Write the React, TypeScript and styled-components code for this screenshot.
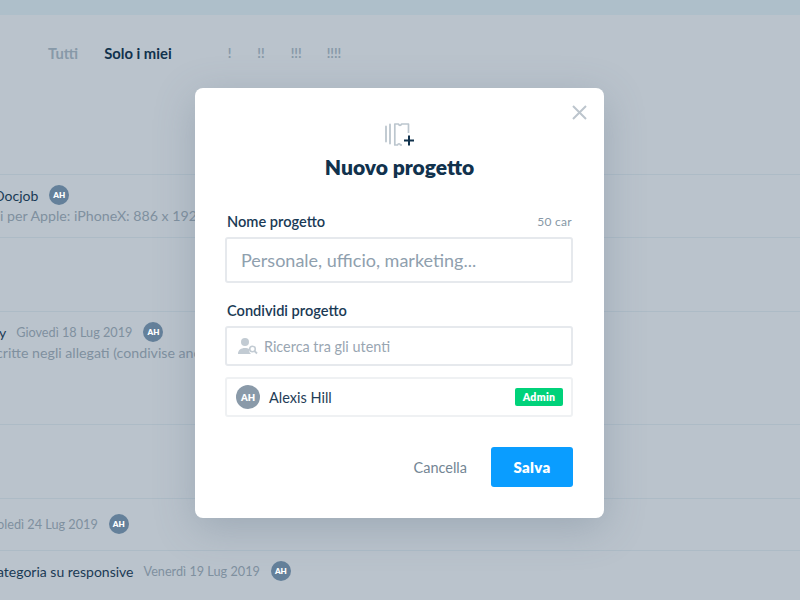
import React from "react";
import styled, { createGlobalStyle } from "styled-components";

const Global = createGlobalStyle`
  html, body { margin: 0; padding: 0; }
  body { width: 800px; height: 600px; overflow: hidden; background: #bac3cc; font-family: "Lato", "Noto Sans", sans-serif; }
  * { box-sizing: border-box; }
`;

const Page = styled.div`
  position: relative;
  width: 800px;
  height: 600px;
  overflow: hidden;
  background: #bac3cc;
`;
const TopBar = styled.div`
  height: 15px;
  background: #aebfca;
`;
const Filters = styled.div`
  display: flex;
  align-items: center;
  height: 76px;
  padding: 0 0 0 48px;
  font-size: 14.8px;
`;
const FilterTab = styled.span<{ $active?: boolean }>`
  font-weight: 700;
  color: ${(p) => (p.$active ? "#11324d" : "#8799a8")};
  margin-right: 26px;
`;
const Bang = styled.span<{ $mr: number }>`
  font-weight: 700;
  color: #8799a8;
  font-size: 13px;
  margin-right: ${(p) => p.$mr}px;
`;
const Spacer = styled.div`
  width: 30px;
`;
const List = styled.div`
  margin-top: 83px;
`;
const Row = styled.div<{ $h: number; $pad?: number }>`
  height: ${(p) => p.$h}px;
  border-top: 1px solid #adbbc6;
  padding-top: ${(p) => p.$pad ?? 10}px;
  white-space: nowrap;
`;
const TitleLine = styled.div<{ $x?: number }>`
  display: flex;
  align-items: center;
  height: 20px;
  margin-left: ${(p) => p.$x ?? 0}px;
  font-size: 14px;
  color: #1a3a55;
`;
const DateText = styled.span<{ $flush?: boolean }>`
  color: #7f909f;
  font-size: 12.7px;
  margin-left: ${(p) => (p.$flush ? 0 : 10)}px;
`;
const Initials = styled.span<{ $bg: string; $size: number }>`
  display: inline-flex;
  align-items: center;
  justify-content: center;
  flex: none;
  width: ${(p) => p.$size}px;
  height: ${(p) => p.$size}px;
  border-radius: 50%;
  background: ${(p) => p.$bg};
  color: #fff;
  font-weight: 800;
  font-size: ${(p) => (p.$size > 22 ? 9.5 : 8)}px;
`;
const RowAvatar = styled.span`
  display: inline-flex;
  margin-left: 11px;
`;
const Sub = styled.div<{ $x?: number }>`
  margin: 2px 0 0 ${(p) => p.$x ?? 0}px;
  font-size: 14.2px;
  color: #7f909f;
`;

const Modal = styled.div`
  position: absolute;
  left: 195px;
  top: 88px;
  width: 409px;
  height: 430px;
  background: #fff;
  border-radius: 8px;
  box-shadow: 0 10px 40px rgba(90, 110, 130, 0.3);
  padding: 35px 31px 0 31px;
`;
const Close = styled.button`
  position: absolute;
  right: 17px;
  top: 17px;
  width: 15px;
  height: 15px;
  padding: 0;
  border: 0;
  background: none;
  display: flex;
`;
const Head = styled.div`
  display: flex;
  flex-direction: column;
  align-items: center;
`;
const Title = styled.h2`
  margin: 7px 0 0;
  font-size: 21px;
  line-height: 26px;
  font-weight: 800;
  color: #11324d;
`;
const LabelRow = styled.div`
  display: flex;
  justify-content: space-between;
  align-items: center;
  height: 20px;
  padding: 0 1px;
  margin-bottom: 6px;
`;
const Label = styled.label`
  font-size: 14.6px;
  font-weight: 600;
  color: #1a3a55;
`;
const Counter = styled.span`
  font-size: 12px;
  color: #8798a6;
  letter-spacing: 0.3px;
`;
const NameField = styled.div`
  height: 46px;
  margin-left: -1px;
  width: 348px;
  border: 2px solid #e6e9ed;
  border-radius: 3px;
  display: flex;
  align-items: center;
  padding-left: 14px;
  font-size: 18px;
  color: #8fa0ae;
`;
const SearchField = styled.div`
  height: 40px;
  margin-left: -1px;
  width: 348px;
  border: 2px solid #e6e9ed;
  border-radius: 3px;
  display: flex;
  align-items: center;
  gap: 6px;
  padding-left: 11px;
  font-size: 14.4px;
  color: #99a6b2;
`;
const UserCard = styled.div`
  height: 40px;
  margin: 11px 0 0 -1px;
  width: 348px;
  border: 2px solid #eff1f3;
  border-radius: 3px;
  display: flex;
  align-items: center;
  padding: 0 8px 0 9px;
`;
const UserName = styled.span`
  margin-left: 9px;
  font-size: 14.5px;
  color: #1f3d57;
  flex: 1;
`;
const Badge = styled.span`
  width: 48px;
  height: 18px;
  background: #00d27a;
  color: #fff;
  font-size: 10.5px;
  font-weight: 800;
  border-radius: 2px;
  display: flex;
  align-items: center;
  justify-content: center;
  letter-spacing: 0.3px;
`;
const Section = styled.div<{ $top: number }>`
  margin-top: ${(p) => p.$top}px;
`;
const Footer = styled.div`
  display: flex;
  justify-content: flex-end;
  align-items: center;
  gap: 24px;
  margin-top: 30px;
`;
const Cancel = styled.span`
  font-size: 14.5px;
  color: #748694;
`;
const Save = styled.button`
  width: 82px;
  height: 40px;
  border: 0;
  border-radius: 3px;
  background: #0a9dff;
  color: #fff;
  font-family: inherit;
  font-size: 15px;
  font-weight: 800;
  letter-spacing: 0.3px;
`;

const ProjectIcon = () => (
  <svg width="30" height="24" viewBox="0 0 30 24" fill="none">
    <path d="M1 3.500v15M5 1.500v19" stroke="#bcc6ce" strokeWidth="1.800" strokeLinecap="round" />
    <path
      d="M17 22h-1.500c-.6-1.700-2.400-1.700-3 0H9.800V1h3.700c.6 1.700 2.400 1.700 3 0h7v9"
      stroke="#bcc6ce"
      strokeWidth="1.700"
      strokeLinejoin="round"
    />
    <path d="M24 12.500v10M19 17.500h10" stroke="#11324d" strokeWidth="2" />
  </svg>
);
const UserSearchIcon = () => (
  <svg width="20" height="17" viewBox="0 0 20 17">
    <circle cx="7" cy="4" r="4" fill="#c2cbd3" />
    <path d="M0 16c0-4 3-6 7-6 1.500 0 3 .4 4 1-.2 2 .6 4 2 5H0z" fill="#c2cbd3" />
    <circle cx="14.500" cy="11" r="2.800" fill="none" stroke="#c2cbd3" strokeWidth="1.600" />
    <path d="M16.500 13l2.500 2.500" stroke="#c2cbd3" strokeWidth="1.800" />
  </svg>
);

const RowInitials = () => (
  <RowAvatar>
    <Initials $bg="#64809a" $size={20}>AH</Initials>
  </RowAvatar>
);

export default function App() {
  return (
    <Page>
      <Global />
      <TopBar />
      <Filters>
        <FilterTab>Tutti</FilterTab>
        <FilterTab $active>Solo i miei</FilterTab>
        <Spacer />
        <Bang $mr={26}>!</Bang>
        <Bang $mr={26}>!!</Bang>
        <Bang $mr={25}>!!!</Bang>
        <Bang $mr={0}>!!!!</Bang>
      </Filters>
      <List>
        <Row $h={63}>
          <TitleLine $x={-6}>
            Docjob
            <RowInitials />
          </TitleLine>
          <Sub>i per Apple: iPhoneX: 886 x 1920</Sub>
        </Row>
        <Row $h={74} />
        <Row $h={113}>
          <TitleLine $x={-1}>
            y
            <DateText>Giovedì 18 Lug 2019</DateText>
            <RowInitials />
          </TitleLine>
          <Sub $x={-4}>critte negli allegati (condivise anche</Sub>
        </Row>
        <Row $h={74} />
        <Row $h={52} $pad={15}>
          <TitleLine $x={-3}>
            <DateText $flush>oledì 24 Lug 2019</DateText>
            <RowInitials />
          </TitleLine>
        </Row>
        <Row $h={50}>
          <TitleLine $x={-3}>
            ategoria su responsive
            <DateText>Venerdì 19 Lug 2019</DateText>
            <RowInitials />
          </TitleLine>
        </Row>
      </List>
      <Modal>
        <Close aria-label="Chiudi">
          <svg width="15" height="15" viewBox="0 0 15 15">
            <path d="M1 1l13 13M14 1L1 14" stroke="#bcc5cd" strokeWidth="2" />
          </svg>
        </Close>
        <Head>
          <ProjectIcon />
          <Title>Nuovo progetto</Title>
        </Head>
        <Section $top={31}>
          <LabelRow>
            <Label>Nome progetto</Label>
            <Counter>50 car</Counter>
          </LabelRow>
          <NameField>Personale, ufficio, marketing...</NameField>
        </Section>
        <Section $top={17}>
          <LabelRow>
            <Label>Condividi progetto</Label>
          </LabelRow>
          <SearchField>
            <UserSearchIcon />
            Ricerca tra gli utenti
          </SearchField>
          <UserCard>
            <Initials $bg="#8a9aa9" $size={24}>AH</Initials>
            <UserName>Alexis Hill</UserName>
            <Badge>Admin</Badge>
          </UserCard>
        </Section>
        <Footer>
          <Cancel>Cancella</Cancel>
          <Save>Salva</Save>
        </Footer>
      </Modal>
    </Page>
  );
}
